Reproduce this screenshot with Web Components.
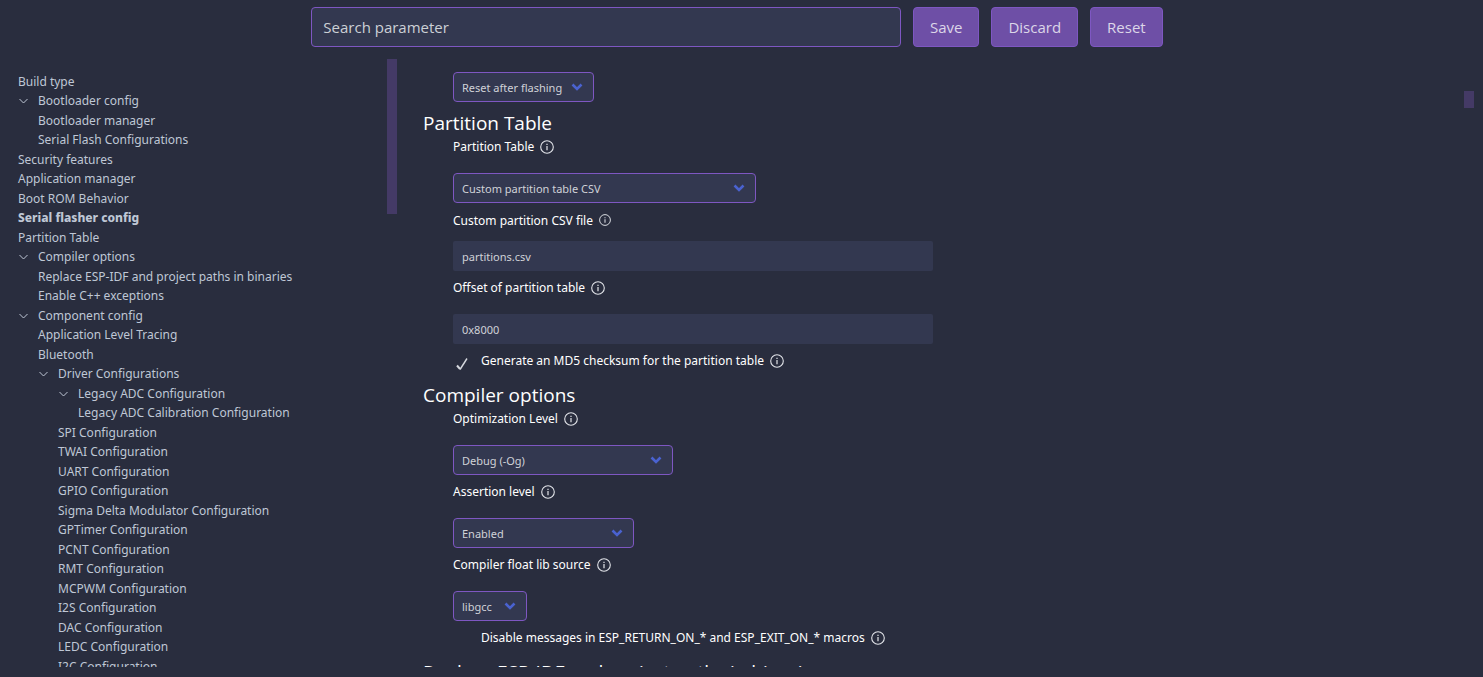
<!DOCTYPE html>
<html lang="en">
<head>
<meta charset="utf-8">
<title>SDK Configuration editor</title>
<style>
  html, body { height: 100%; margin: 0; }
  body {
    background: #292d3e;
    color: #bfc7d5;
    font-family: "Noto Sans", "Open Sans", sans-serif;
    font-size: 12px;
    overflow: hidden;
  }
</style>
</head>
<body>
<config-app></config-app>

<template id="app-tpl">
  <style>
    :host { display: flex; flex-direction: column; height: 100vh; box-sizing: border-box; padding: 0 9px 10px 0; }
    .body { flex: 1; min-height: 0; display: flex; margin-top: 12px; }
    nav-tree { flex: 0 0 397px; }
    settings-pane { flex: 1; min-width: 0; }
  </style>
  <search-bar></search-bar>
  <div class="body">
    <nav-tree></nav-tree>
    <settings-pane></settings-pane>
  </div>
</template>

<template id="search-tpl">
  <style>
    :host { display: flex; justify-content: center; gap: 12px; padding-top: 7px; font-family: "Open Sans", sans-serif; }
    input {
      box-sizing: border-box; width: 40%; height: 40px; margin: 0; padding: 0 11px;
      border: 1px solid #7e57c2; border-radius: 4px; background: #333850;
      color: #d0d3da; font: inherit; font-size: 15px; outline: none;
    }
    input::placeholder { color: #ccd0d6; opacity: 1; }
  </style>
  <input type="search" placeholder="Search parameter" aria-label="Search parameter">
  <action-button>Save</action-button>
  <action-button>Discard</action-button>
  <action-button>Reset</action-button>
</template>

<template id="button-tpl">
  <style>
    :host { display: block; }
    button {
      box-sizing: border-box; height: 40px; padding: 0 16px; margin: 0;
      border: 1px solid #7e57c2; border-radius: 4px; background: #6e4fa6;
      color: #dcd6e8; font: inherit; font-size: 15px;
    }
  </style>
  <button type="button"><slot></slot></button>
</template>

<template id="nav-tpl">
  <style>
    :host { display: flex; justify-content: space-between; overflow: hidden; }
    nav { padding: 13px 0 0 18px; white-space: nowrap; }
    nav-item { height: 19px; padding-left: calc(var(--level) * 20px); }
    nav-item:nth-child(even) { height: 20px; }
  </style>
  <nav aria-label="Configuration sections"></nav>
  <scroll-thumb style="--length: 155px"></scroll-thumb>
</template>

<template id="thumb-tpl">
  <style>
    :host { display: block; flex: none; width: 10px; height: var(--length); margin-top: var(--start, 0); background: #443a66; }
  </style>
</template>

<template id="item-tpl">
  <style>
    :host { display: flex; align-items: center; line-height: 20px; }
    a { color: inherit; text-decoration: none; }
    :host([current]) a { font-weight: 800; }
    svg { display: none; width: 10px; height: 10px; margin-right: 10px; }
    :host([open]) svg { display: block; }
  </style>
  <svg viewBox="0 0 10 10" fill="none" stroke="#bfc7d5" stroke-width="1"><path d="M1.5 3 5.5 7 9.5 3"/></svg>
  <a href="#"><slot></slot></a>
</template>

<template id="pane-tpl">
  <style>
    :host { display: flex; justify-content: space-between; overflow: hidden; }
    main { flex: 1; min-width: 0; padding: 13px 0 0 26px; white-space: nowrap; }
    h2 {
      margin: 0 0 -7px; padding-top: 7px; color: #fff;
      font-family: "Open Sans", sans-serif; font-size: 19px; font-weight: 400; line-height: 28px;
    }
  </style>
  <main>
    <config-field type="select" name="Flash action" bare value="Reset after flashing" style="--width: 141px"></config-field>
    <h2>Partition Table</h2>
    <config-field type="select" name="Partition Table" value="Custom partition table CSV" style="--width: 303px"></config-field>
    <config-field type="text" compact name="Custom partition CSV file" value="partitions.csv"></config-field>
    <config-field type="text" name="Offset of partition table" value="0x8000"></config-field>
    <config-field type="check" checked name="Generate an MD5 checksum for the partition table"></config-field>
    <h2>Compiler options</h2>
    <config-field type="select" name="Optimization Level" value="Debug (-Og)" style="--width: 220px"></config-field>
    <config-field type="select" name="Assertion level" value="Enabled" style="--width: 181px"></config-field>
    <config-field type="select" name="Compiler float lib source" value="libgcc" style="--width: 74px"></config-field>
    <config-field type="check" name="Disable messages in ESP_RETURN_ON_* and ESP_EXIT_ON_* macros"></config-field>
    <h2>Replace ESP-IDF and project paths in binaries</h2>
  </main>
  <scroll-thumb style="--start: 32px; --length: 17px"></scroll-thumb>
</template>

<template id="field-tpl">
  <style>
    :host { display: block; padding-left: 30px; }
    .label { display: flex; align-items: center; gap: 6px; height: 20px; padding: 7px 0 16px; color: #fff; line-height: 20px; }
    :host([compact]) .label { padding: 8px 0 10px; }
    :host([compact]) info-icon { --size: 12px; margin-bottom: 3px; }
    .label.check { padding: 7px 0 3px; gap: 0; }
    .check label { margin-right: 6px; }
    .box { display: grid; margin: 5px 10px 0 0; }
    .box input {
      grid-area: 1 / 1; appearance: none; width: 18px; height: 18px; margin: 0; outline: none;
    }
    .tick { grid-area: 1 / 1; width: 18px; height: 18px; pointer-events: none; visibility: hidden; }
    .box input:checked + .tick { visibility: visible; }
    .pick { display: inline-grid; width: var(--width); align-items: center; vertical-align: top; }
    .pick select {
      grid-area: 1 / 1; appearance: none; box-sizing: border-box; width: 100%; height: 30px; margin: 0; padding: 0 8px;
      border: 1px solid #7e57c2; border-radius: 4px; background: #333850; color: #d0d2d8;
      font: inherit; font-size: 11px; outline: none;
    }
    .pick svg { grid-area: 1 / 1; justify-self: end; width: 12px; height: 12px; margin-right: 11px; pointer-events: none; }
    .entry {
      display: block; box-sizing: border-box; width: 480px; max-width: 100%; height: 30px; margin: 0; padding: 0 9px;
      border: 0; border-radius: 2px; background: #333850; color: #d0d2d8; font: inherit; font-size: 11px; outline: none;
    }
  </style>
</template>

<template id="info-tpl">
  <style>
    :host { display: block; flex: none; width: var(--size, 14px); height: var(--size, 14px); }
    svg { display: block; width: 100%; height: 100%; }
  </style>
  <svg viewBox="0 0 14 14"><circle cx="7" cy="7" r="6.3" fill="none" stroke="#e3e5ea" stroke-width="1.1"/><path d="M6.4 6h1.2v4.2H6.4zM6.4 3.8h1.2V5H6.4z" fill="#e3e5ea"/></svg>
</template>

<script>
  class TemplateElement extends HTMLElement {
    constructor() {
      super();
      this.attachShadow({ mode: 'open' });
      this.shadowRoot.append(document.getElementById(this.constructor.template).content.cloneNode(true));
    }
  }

  class InfoIcon extends TemplateElement { static template = 'info-tpl'; }
  class ScrollThumb extends TemplateElement { static template = 'thumb-tpl'; }
  class ActionButton extends TemplateElement { static template = 'button-tpl'; }
  class SearchBar extends TemplateElement { static template = 'search-tpl'; }
  class NavItem extends TemplateElement { static template = 'item-tpl'; }

  // Each row: [level, title, flag]
  const SECTIONS = [
    [0, 'Build type'], [0, 'Bootloader config', 'open'], [1, 'Bootloader manager'], [1, 'Serial Flash Configurations'],
    [0, 'Security features'], [0, 'Application manager'], [0, 'Boot ROM Behavior'], [0, 'Serial flasher config', 'current'],
    [0, 'Partition Table'], [0, 'Compiler options', 'open'], [1, 'Replace ESP-IDF and project paths in binaries'],
    [1, 'Enable C++ exceptions'], [0, 'Component config', 'open'], [1, 'Application Level Tracing'], [1, 'Bluetooth'],
    [1, 'Driver Configurations', 'open'], [2, 'Legacy ADC Configuration', 'open'], [3, 'Legacy ADC Calibration Configuration'],
    [2, 'SPI Configuration'], [2, 'TWAI Configuration'], [2, 'UART Configuration'], [2, 'GPIO Configuration'],
    [2, 'Sigma Delta Modulator Configuration'], [2, 'GPTimer Configuration'], [2, 'PCNT Configuration'],
    [2, 'RMT Configuration'], [2, 'MCPWM Configuration'], [2, 'I2S Configuration'], [2, 'DAC Configuration'],
    [2, 'LEDC Configuration'], [2, 'I2C Configuration']
  ];

  class NavTree extends TemplateElement {
    static template = 'nav-tpl';
    connectedCallback() {
      const nav = this.shadowRoot.querySelector('nav');
      for (const [level, title, flag] of SECTIONS) {
        const item = document.createElement('nav-item');
        item.style.setProperty('--level', level);
        if (flag) item.setAttribute(flag, '');
        item.textContent = title;
        nav.append(item);
      }
    }
  }

  class ConfigField extends TemplateElement {
    static template = 'field-tpl';
    connectedCallback() {
      const type = this.getAttribute('type');
      const name = this.getAttribute('name');
      const value = this.getAttribute('value');
      const holder = document.createElement('div');
      if (type === 'check') {
        holder.innerHTML = `<div class="label check"><span class="box"><input id="control" type="checkbox"><svg class="tick" viewBox="0 0 18 18" fill="none" stroke="#d5d8de"><path d="M4 10.5 7 14" stroke-width="2"/><path d="M7 14.5 14 3.5" stroke-width="1.4"/></svg></span><label for="control"></label><info-icon></info-icon></div>`;
      } else {
        const control = type === 'select'
          ? '<span class="pick"><select id="control"><option></option></select><svg viewBox="0 0 12 12" fill="none" stroke="#4a62d0" stroke-width="2.6"><path d="M1.5 3.5 6 8 10.5 3.5"/></svg></span>'
          : '<input id="control" class="entry" type="text">';
        holder.innerHTML = `<div class="label"><label for="control"></label><info-icon></info-icon></div>${control}`;
      }
      holder.querySelector('label').textContent = name;
      const control = holder.querySelector('#control');
      if (type === 'select') control.options[0].textContent = value;
      else if (type === 'text') control.value = value;
      else control.checked = this.hasAttribute('checked');
      if (this.hasAttribute('bare')) {
        holder.querySelector('.label').remove();
        control.setAttribute('aria-label', name);
      }
      this.shadowRoot.append(holder);
    }
  }

  class SettingsPane extends TemplateElement { static template = 'pane-tpl'; }
  class ConfigApp extends TemplateElement { static template = 'app-tpl'; }

  customElements.define('info-icon', InfoIcon);
  customElements.define('scroll-thumb', ScrollThumb);
  customElements.define('action-button', ActionButton);
  customElements.define('search-bar', SearchBar);
  customElements.define('nav-item', NavItem);
  customElements.define('nav-tree', NavTree);
  customElements.define('config-field', ConfigField);
  customElements.define('settings-pane', SettingsPane);
  customElements.define('config-app', ConfigApp);
</script>
</body>
</html>
